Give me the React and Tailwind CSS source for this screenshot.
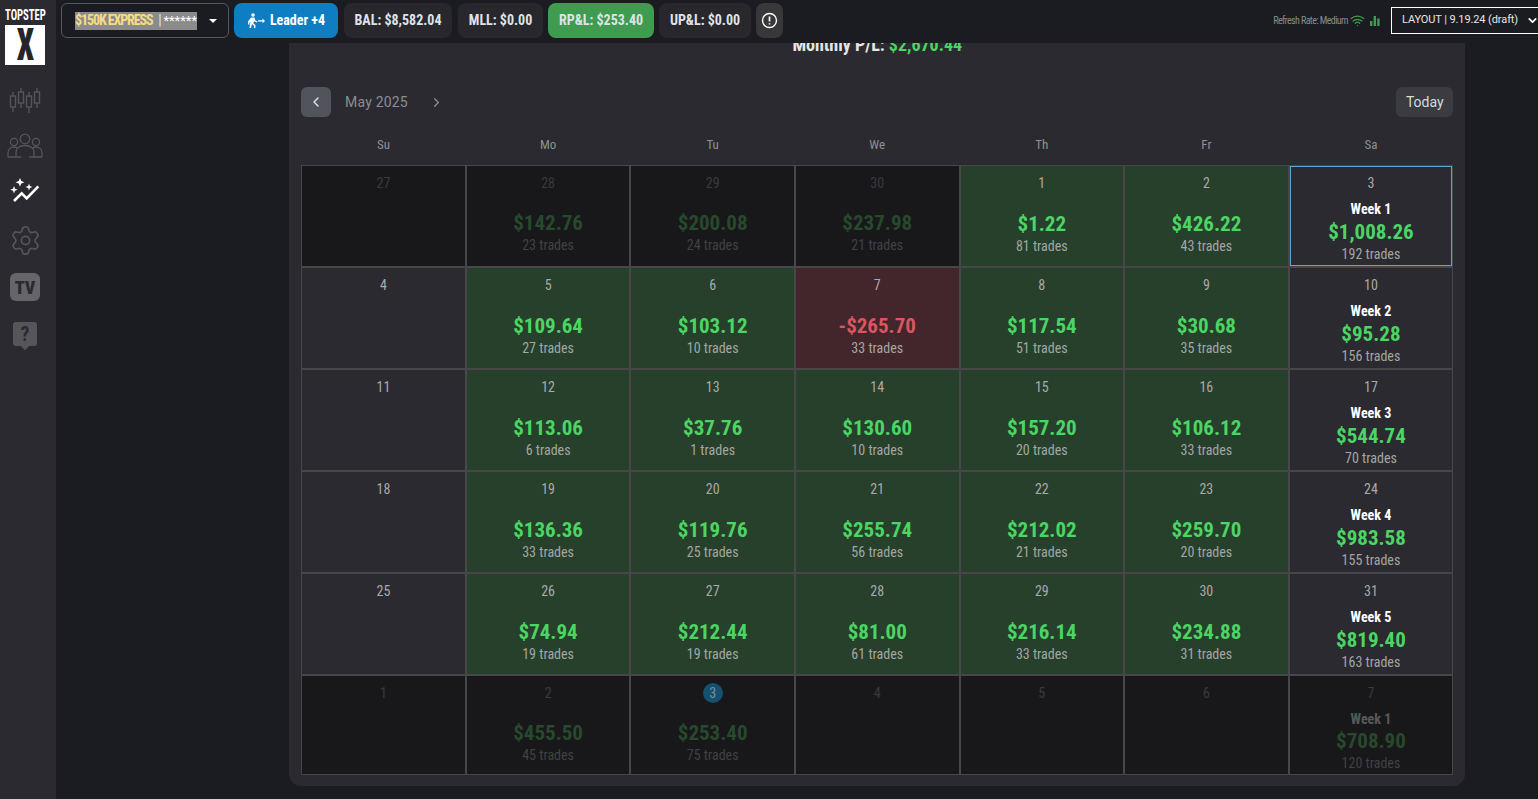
import React from 'react';
import { ChevronLeft, ChevronRight, ChevronDown, Wifi, Settings } from 'lucide-react';

const cond = "font-['Roboto_Condensed','Liberation_Sans_Narrow',Roboto,sans-serif] [font-stretch:condensed]";
const plain = "font-['Roboto',sans-serif] [font-stretch:normal]";

const weeks = [
  [
    { d: 27, dim: true },
    { d: 28, dim: true, pnl: '$142.76', trades: 23 },
    { d: 29, dim: true, pnl: '$200.08', trades: 24 },
    { d: 30, dim: true, pnl: '$237.98', trades: 21 },
    { d: 1, pnl: '$1.22', trades: 81 },
    { d: 2, pnl: '$426.22', trades: 43 },
    { d: 3, week: 'Week 1', pnl: '$1,008.26', trades: 192, selected: true },
  ],
  [
    { d: 4 },
    { d: 5, pnl: '$109.64', trades: 27 },
    { d: 6, pnl: '$103.12', trades: 10 },
    { d: 7, pnl: '-$265.70', trades: 33, loss: true },
    { d: 8, pnl: '$117.54', trades: 51 },
    { d: 9, pnl: '$30.68', trades: 35 },
    { d: 10, week: 'Week 2', pnl: '$95.28', trades: 156 },
  ],
  [
    { d: 11 },
    { d: 12, pnl: '$113.06', trades: 6 },
    { d: 13, pnl: '$37.76', trades: 1 },
    { d: 14, pnl: '$130.60', trades: 10 },
    { d: 15, pnl: '$157.20', trades: 20 },
    { d: 16, pnl: '$106.12', trades: 33 },
    { d: 17, week: 'Week 3', pnl: '$544.74', trades: 70 },
  ],
  [
    { d: 18 },
    { d: 19, pnl: '$136.36', trades: 33 },
    { d: 20, pnl: '$119.76', trades: 25 },
    { d: 21, pnl: '$255.74', trades: 56 },
    { d: 22, pnl: '$212.02', trades: 21 },
    { d: 23, pnl: '$259.70', trades: 20 },
    { d: 24, week: 'Week 4', pnl: '$983.58', trades: 155 },
  ],
  [
    { d: 25 },
    { d: 26, pnl: '$74.94', trades: 19 },
    { d: 27, pnl: '$212.44', trades: 19 },
    { d: 28, pnl: '$81.00', trades: 61 },
    { d: 29, pnl: '$216.14', trades: 33 },
    { d: 30, pnl: '$234.88', trades: 31 },
    { d: 31, week: 'Week 5', pnl: '$819.40', trades: 163 },
  ],
  [
    { d: 1, dim: true },
    { d: 2, dim: true, pnl: '$455.50', trades: 45 },
    { d: 3, dim: true, pnl: '$253.40', trades: 75, today: true },
    { d: 4, dim: true },
    { d: 5, dim: true },
    { d: 6, dim: true },
    { d: 7, dim: true, week: 'Week 1', pnl: '$708.90', trades: 120 },
  ],
];

function Cell({ c }) {
  let bg = 'bg-[#2a2a30]';
  if (c.dim) bg = 'bg-[#18181b]';
  else if (c.loss) bg = 'bg-[#42262b]';
  else if (c.pnl && !c.week) bg = 'bg-[#27402b]';

  return (
    <div className={`h-full border border-[#47474a] flex flex-col items-center ${bg} ${c.selected ? 'shadow-[inset_0_0_0_1px_#57a9d3]' : ''}`}>
      <div className="h-[34px] shrink-0 flex items-center justify-center">
        <span className={`w-[20px] h-[20px] rounded-full flex items-center justify-center text-[14px] ${c.today ? 'bg-[#14506f] text-[#7f8f99]' : c.dim ? 'text-[#3a3a3e]' : 'text-[#a9a9ab]'}`}>
          {c.d}
        </span>
      </div>
      {c.week ? (
        <div className={`h-[18px] leading-[18px] text-[14px] font-bold ${c.dim ? 'text-[#58585a]' : 'mb-[1px] text-white'}`}>{c.week}</div>
      ) : (
        <div className={c.dim ? 'h-[10px]' : 'h-[11px]'} />
      )}
      {c.pnl && (
        <div className={`h-[26px] leading-[26px] text-[21px] font-bold ${c.dim ? 'text-[#27492c]' : c.loss ? 'text-[#db5560]' : 'text-[#4bd563]'}`}>{c.pnl}</div>
      )}
      {c.pnl && (
        <div className={`h-[18px] leading-[18px] text-[14px] ${c.dim ? 'text-[#414144]' : 'text-[#a3a6a3]'}`}>{c.trades} trades</div>
      )}
    </div>
  );
}

function Stat({ children, className = 'bg-[#27272c]' }) {
  return (
    <div className={`h-[35px] rounded-lg flex items-center justify-center text-[14px] font-bold text-[#dfe3e8] ${className}`}>
      {children}
    </div>
  );
}

function SideIcons() {
  const g = '#55555a';
  return (
    <div className="flex flex-col items-center pr-[6px]">
      <svg className="mt-[44px]" width="32" height="28" viewBox="0 0 32 28" fill="none" stroke={g} strokeWidth="1.4">
        <path d="M4 5v4M4 20v5M12 1v4M12 16v5M20 5v4M20 20v6M28 1v4M28 16v5" />
        <rect x="1.5" y="9" width="5" height="11" />
        <rect x="9.5" y="5" width="5" height="11" />
        <rect x="17.5" y="9" width="5" height="11" />
        <rect x="25.5" y="5" width="5" height="11" />
      </svg>
      <svg className="mt-[18px]" width="36" height="25" viewBox="0 0 36 25" fill="none" stroke={g} strokeWidth="1.3">
        <circle cx="18" cy="6" r="4.8" />
        <circle cx="7" cy="9" r="3.6" />
        <circle cx="29" cy="9" r="3.6" />
        <path d="M9 24v-5c0-4 4-6.5 9-6.5s9 2.5 9 6.5v5" />
        <path d="M1 24v-4c0-3.5 2.5-6 6-6 1.5 0 2.5.3 3.5 1M35 24v-4c0-3.5-2.5-6-6-6-1.5 0-2.5.3-3.5 1" />
        <path d="M1 24h13M22 24h13" />
      </svg>
      <svg className="mt-[20px]" width="30" height="26" viewBox="0 0 30 26" fill="none">
        <path d="M4 23l7.7-7.7 5 5L28.3 8.3" stroke="#fff" strokeWidth="2.6" />
        <path d="M10 0l1.300 3 3.200 1.300-3.200 1.300L10 8.600 8.700 5.600 5.500 4.300 8.700 3z" fill="#fff" />
        <path d="M4 8l1 2.7 2.7 1-2.7 1L4 15.400l-1-2.700-2.700-1 2.700-1z" fill="#fff" />
        <path d="M19 5.500l.9 2.600 2.600.9-2.600.9-.9 2.600-.9-2.600-2.600-.9 2.600-.9z" fill="#fff" />
      </svg>
      <Settings className="mt-[20px]" size={33} color={g} strokeWidth={1.2} />
      <div className="mt-[16px] w-[30px] h-[28px] rounded-md bg-[#66666a] flex items-center justify-center text-[18px] font-black text-[#2a2a30]">TV</div>
      <div className="mt-[21px] relative w-[24px] h-[24px] bg-[#56565a] rounded-[3px] flex items-center justify-center text-[20px] font-bold text-[#2a2a30]">
        ?
        <span className="absolute -bottom-[3px] left-[9px] w-[6px] h-[6px] rotate-45 bg-[#56565a]" />
      </div>
    </div>
  );
}

export default function App() {
  return (
    <div className={`w-[1538px] h-[799px] overflow-hidden flex flex-col bg-[#1b1c21] ${cond}`}>
      <header className="relative z-10 h-[43px] shrink-0 flex bg-[#1b1c21]">
        <div className="w-[56px] shrink-0 pl-[5px] bg-[#2a2a30]">
          <div className="w-[40px] h-[25px] pt-[8px] text-[14px] leading-[14px] font-bold text-white whitespace-nowrap">
            <span className="inline-block origin-left scale-x-[0.76]">TOPSTEP</span>
          </div>
          <div className="w-[40px] h-[40px] bg-white flex items-center justify-center text-[44px] leading-[40px] font-black text-[#26262a]">
            <span className="inline-block scale-x-[0.7]">X</span>
          </div>
        </div>
        <div className="flex-1 flex items-start pt-[3px] pl-[5px] gap-[5px]">
          <div className="w-[168px] h-[35px] border border-[#57585c] rounded-md flex items-center pl-[13px] pr-[11px]">
            <span className="h-[18px] w-[122px] flex items-center bg-[#8b8b8b] text-[14px] font-bold whitespace-nowrap">
              <span className="tracking-[-1.1px] text-[#f7dc85]">$150K EXPRESS</span>
              <span className="ml-[6px] text-[#e5e5e5] font-normal">|</span>
              <span className="ml-auto text-[13px] text-white font-normal">******</span>
            </span>
            <span className="ml-auto w-0 h-0 border-x-[4px] border-x-transparent border-t-[4px] border-t-white" />
          </div>
          <Stat className="w-[104px] bg-[#0f7dc2] text-white gap-[5px]">
            <svg width="18" height="15" viewBox="0 0 18 15" fill="#fff">
              <circle cx="6" cy="2" r="1.8" />
              <path d="M4 4.5h3.5l1 3 2 1-.5 1-3-1.2-.6 2.2 2 1.5v3H7v-2.3L5 11l-1 4H2.4l1-6-1 .5v2H1V8.5z" />
              <path d="M11 7.2h4.5V5.5L18 8l-2.5 2.2V8.5H11z" />
            </svg>
            Leader +4
          </Stat>
          <Stat className="ml-[1px] w-[108px] bg-[#27272c]">BAL: $8,582.04</Stat>
          <Stat className="ml-[1px] w-[85px] bg-[#27272c]">MLL: $0.00</Stat>
          <Stat className="w-[106px] bg-[#3f9b4f] text-[#dcefe0]">RP&amp;L: $253.40</Stat>
          <Stat className="w-[92px] bg-[#27272c]">UP&amp;L: $0.00</Stat>
          <Stat className="w-[27px] bg-[#38383a]">
            <svg width="17" height="17" viewBox="0 0 17 17" fill="none" stroke="#fff" strokeWidth="1.4">
              <circle cx="8.5" cy="8.5" r="7" />
              <path d="M8.5 4.5v5M8.5 11.2v1.4" strokeWidth="1.7" />
            </svg>
          </Stat>
          <div className="ml-auto -mr-[12px] flex items-center h-[35px]">
            <span className="text-[10px] tracking-[-0.6px] text-[#8a8c8a] whitespace-nowrap">Refresh Rate: Medium</span>
            <Wifi className="ml-[2px]" size={15} color="#3f9b4f" strokeWidth={2} />
            <svg className="ml-[5px]" width="10" height="10" viewBox="0 0 10 10" fill="#3f9b4f">
              <rect x="0" y="5" width="2.4" height="5" />
              <rect x="3.6" y="0" width="2.4" height="10" />
              <rect x="7.2" y="2.5" width="2.4" height="7.5" />
            </svg>
            <div className={`ml-[11px] w-[159px] h-[27px] -mt-[1px] border border-white flex items-center pl-[10px] text-[11px] tracking-[-0.1px] text-[#e5e5e5] whitespace-nowrap ${plain}`}>
              LAYOUT | 9.19.24 (draft)
              <ChevronDown className="ml-[8px]" size={13} strokeWidth={3} color="#fff" />
            </div>
          </div>
        </div>
      </header>

      <div className="flex-1 flex min-h-0">
        <aside className="w-[56px] shrink-0 bg-[#2a2a30]">
          <SideIcons />
        </aside>
        <main className="flex-1 pl-[233px] pr-[73px] pb-[13px] min-h-0">
          <div className="h-full bg-[#2a2a30] rounded-b-xl overflow-hidden pl-[12.25px] pr-[11.75px]">
            <div className="-mt-[9px] h-[22px] leading-[22px] text-center text-[18px] font-bold text-[#e5e5e5]">
              Monthly P/L: <span className="text-[#4bd563]">$2,670.44</span>
            </div>
            <div className="mt-[31px] h-[30px] flex items-center">
              <button className="-ml-[0.25px] w-[30px] h-[30px] rounded-md bg-[#52545b] flex items-center justify-center">
                <ChevronLeft size={16} color="#e5e7eb" />
              </button>
              <span className={`ml-[14px] text-[14px] tracking-[0.2px] text-[#8b8d94] ${plain}`}>May 2025</span>
              <ChevronRight className="ml-[21px]" size={15} color="#8b8d94" />
              <button className={`ml-auto w-[57px] h-[30px] rounded-md bg-[#3a3c42] text-[14px] text-[#d8dade] ${plain}`}>Today</button>
            </div>
            <div className="mt-[13px] h-[35px] pb-[6px] grid grid-cols-7 items-center text-center text-[13px] text-[#8e9096]">
              {['Su', 'Mo', 'Tu', 'We', 'Th', 'Fr', 'Sa'].map((n) => (
                <div key={n}>{n}</div>
              ))}
            </div>
            <div className="grid grid-cols-7 grid-rows-[repeat(5,102px)_100px]">
              {weeks.flat().map((c, i) => (
                <Cell key={i} c={c} />
              ))}
            </div>
          </div>
        </main>
      </div>
    </div>
  );
}
